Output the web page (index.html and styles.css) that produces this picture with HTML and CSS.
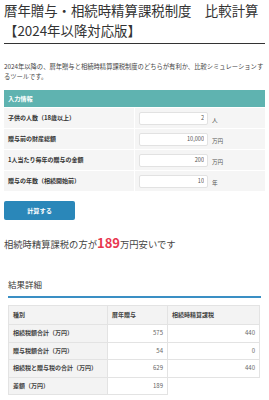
FILE: index.html
```html
<!DOCTYPE html>
<html lang="ja">
<head>
    <meta charset="UTF-8" />
    <link rel="stylesheet" href="styles.css">
</head>
<body>
    <h1 class="page-title">暦年贈与・相続時精算課税制度　比較計算<span class="title-sub">【2024年以降対応版】</span></h1>

    <p class="lead">2024年以降の、暦年贈与と相続時精算課税制度のどちらが有利か、比較シミュレーションするツールです。</p>

    <table class="input-table">
        <tr>
            <th colspan="2">入力情報</th>
        </tr>
        <tr>
            <td class="label">子供の人数（18歳以上）</td>
            <td class="field"><input type="text" value="2"><span class="unit">人</span></td>
        </tr>
        <tr>
            <td class="label">贈与前の財産総額</td>
            <td class="field"><input type="text" value="10,000"><span class="unit">万円</span></td>
        </tr>
        <tr>
            <td class="label">1人当たり毎年の贈与の金額</td>
            <td class="field"><input type="text" value="200"><span class="unit">万円</span></td>
        </tr>
        <tr>
            <td class="label">贈与の年数（相続開始前）</td>
            <td class="field"><input type="text" value="10"><span class="unit">年</span></td>
        </tr>
    </table>

    <button class="calc-btn">計算する</button>

    <p class="summary">相続時精算課税の方が<span class="diff">189</span>万円安いです</p>

    <div class="result">
        <h2 class="result-title">結果詳細</h2>
        <table class="result-table">
            <tr>
                <th class="col-name">種別</th>
                <th class="col-a">暦年贈与</th>
                <th class="col-b">相続時精算課税</th>
            </tr>
            <tr>
                <th>相続税額合計（万円）</th>
                <td>575</td>
                <td>440</td>
            </tr>
            <tr>
                <th>贈与税額合計（万円）</th>
                <td>54</td>
                <td>0</td>
            </tr>
            <tr>
                <th>相続税と贈与税の合計（万円）</th>
                <td>629</td>
                <td>440</td>
            </tr>
            <tr>
                <th>差額（万円）</th>
                <td>189</td>
            </tr>
        </table>
    </div>
</body>
</html>
```

FILE: styles.css
```css
body {
    font-family: "Noto Sans CJK JP", "Noto Sans", sans-serif;
    margin: 0;
    padding: 0 4px;
    background-color: #ffffff;
    color: #333;
}
.page-title {
    margin: 0;
    padding-bottom: 3px;
    font-size: 13.4px;
    font-weight: normal;
    line-height: 20px;
    color: #333;
    border-bottom: 1px solid #333;
}
.title-sub {
    display: block;
}
.lead {
    margin: 18px 0 0;
    font-size: 6.3px;
    line-height: 10px;
    color: #444;
}
.input-table {
    width: 261px;
    margin-top: 8px;
    border-collapse: collapse;
    background-color: #f5f5f5;
    table-layout: fixed;
}
.input-table th {
    height: 17px;
    padding: 0 0 0 4px;
    background-color: #5fb3b0;
    color: #fff;
    font-size: 6.2px;
    font-weight: bold;
    line-height: 8px;
    text-align: left;
}
.input-table td {
    height: 20px;
    padding: 0;
    border-top: 1px solid #fff;
    font-size: 6px;
    line-height: 8px;
}
.input-table .label {
    width: 93px;
    padding-left: 4px;
    border-right: 1px solid #fff;
    font-weight: bold;
    color: #333;
}
.input-table .field {
    padding-left: 4px;
}
.input-table input {
    box-sizing: border-box;
    width: 69px;
    height: 13px;
    padding: 0 3px;
    border: 1px solid #e2e2e2;
    border-radius: 2px;
    background-color: #fff;
    font-family: inherit;
    font-size: 5.6px;
    color: #555;
    text-align: right;
    vertical-align: middle;
}
.unit {
    margin-left: 4px;
    font-size: 5.6px;
    color: #555;
    vertical-align: -2px;
}
.calc-btn {
    display: block;
    width: 71px;
    height: 19px;
    margin-top: 10px;
    padding: 0;
    border: none;
    border-radius: 2px;
    background-color: #2a87b9;
    color: #fff;
    font-family: inherit;
    font-size: 6.2px;
    font-weight: bold;
    cursor: pointer;
}
.summary {
    margin: 15px 0 0;
    font-size: 9.3px;
    line-height: 16px;
    color: #444;
}
.diff {
    font-size: 13px;
    font-weight: bold;
    color: #e8384f;
}
.result {
    padding: 0 4px;
    margin-top: 26px;
}
.result-title {
    margin: 0;
    padding-bottom: 6px;
    font-size: 8.5px;
    font-weight: normal;
    line-height: 12px;
    color: #333;
    border-bottom: 2px solid #3a8fc4;
}
.result-table {
    width: 252px;
    margin-top: 7px;
    border-collapse: collapse;
    table-layout: fixed;
    font-size: 6px;
    line-height: 8px;
}
.result-table th,
.result-table td {
    height: 16.5px;
    padding: 0 4px;
    border: 1px solid #e3e3e3;
}
.result-table th {
    background-color: #f3f3f3;
    font-weight: bold;
    color: #444;
    text-align: left;
}
.result-table tr:first-child th {
    height: 18px;
}
.result-table td {
    text-align: right;
    color: #666;
}
.col-name {
    width: 90px;
}
.col-a {
    width: 51px;
}
```
